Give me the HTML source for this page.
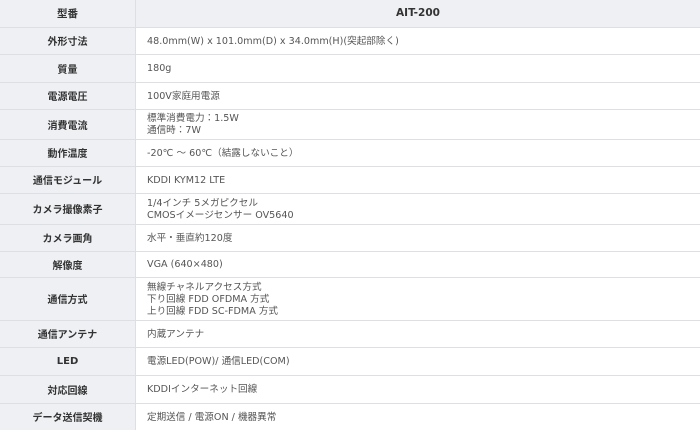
<!DOCTYPE html>
<html><head><meta charset="utf-8"><style>
html,body{margin:0;padding:0;background:#fff;}
table{border-collapse:collapse;width:700px;table-layout:fixed;font-family:"DejaVu Sans","Noto Sans CJK JP",sans-serif;font-size:9.6px;}
td{border-bottom:1px solid #dcdfe3;padding:0;vertical-align:middle;}
td.l{width:135px;background:#eef0f3;border-right:1px solid #dcdfe3;text-align:center;font-weight:bold;color:#333;font-size:10px;}
td.r{padding-left:11px;padding-top:2px;color:#555;line-height:12px;}
tr.h td{background:#eef0f3;font-weight:bold;color:#333;text-align:center;font-size:10.5px;}
</style></head><body>
<table>
<tr class="h" style="height:27px"><td class="l">型番</td><td>AIT-200</td></tr>
<tr style="height:27px"><td class="l">外形寸法</td><td class="r">48.0mm(W) x 101.0mm(D) x 34.0mm(H)(突起部除く)</td></tr>
<tr style="height:28px"><td class="l">質量</td><td class="r">180g</td></tr>
<tr style="height:27px"><td class="l">電源電圧</td><td class="r">100V家庭用電源</td></tr>
<tr style="height:30px"><td class="l">消費電流</td><td class="r">標準消費電力：1.5W<br>通信時：7W</td></tr>
<tr style="height:27px"><td class="l">動作温度</td><td class="r">-20℃ 〜 60℃（結露しないこと）</td></tr>
<tr style="height:27px"><td class="l">通信モジュール</td><td class="r">KDDI KYM12 LTE</td></tr>
<tr style="height:31px"><td class="l">カメラ撮像素子</td><td class="r">1/4インチ 5メガピクセル<br>CMOSイメージセンサー OV5640</td></tr>
<tr style="height:27px"><td class="l">カメラ画角</td><td class="r">水平・垂直約120度</td></tr>
<tr style="height:26px"><td class="l">解像度</td><td class="r">VGA (640×480)</td></tr>
<tr style="height:43px"><td class="l">通信方式</td><td class="r">無線チャネルアクセス方式<br>下り回線 FDD OFDMA 方式<br>上り回線 FDD SC-FDMA 方式</td></tr>
<tr style="height:27px"><td class="l">通信アンテナ</td><td class="r">内蔵アンテナ</td></tr>
<tr style="height:28px"><td class="l">LED</td><td class="r">電源LED(POW)/ 通信LED(COM)</td></tr>
<tr style="height:28px"><td class="l">対応回線</td><td class="r">KDDIインターネット回線</td></tr>
<tr style="height:27px"><td class="l" style="border-bottom:none">データ送信契機</td><td class="r" style="border-bottom:none">定期送信 / 電源ON / 機器異常</td></tr>
</table>
</body></html>
